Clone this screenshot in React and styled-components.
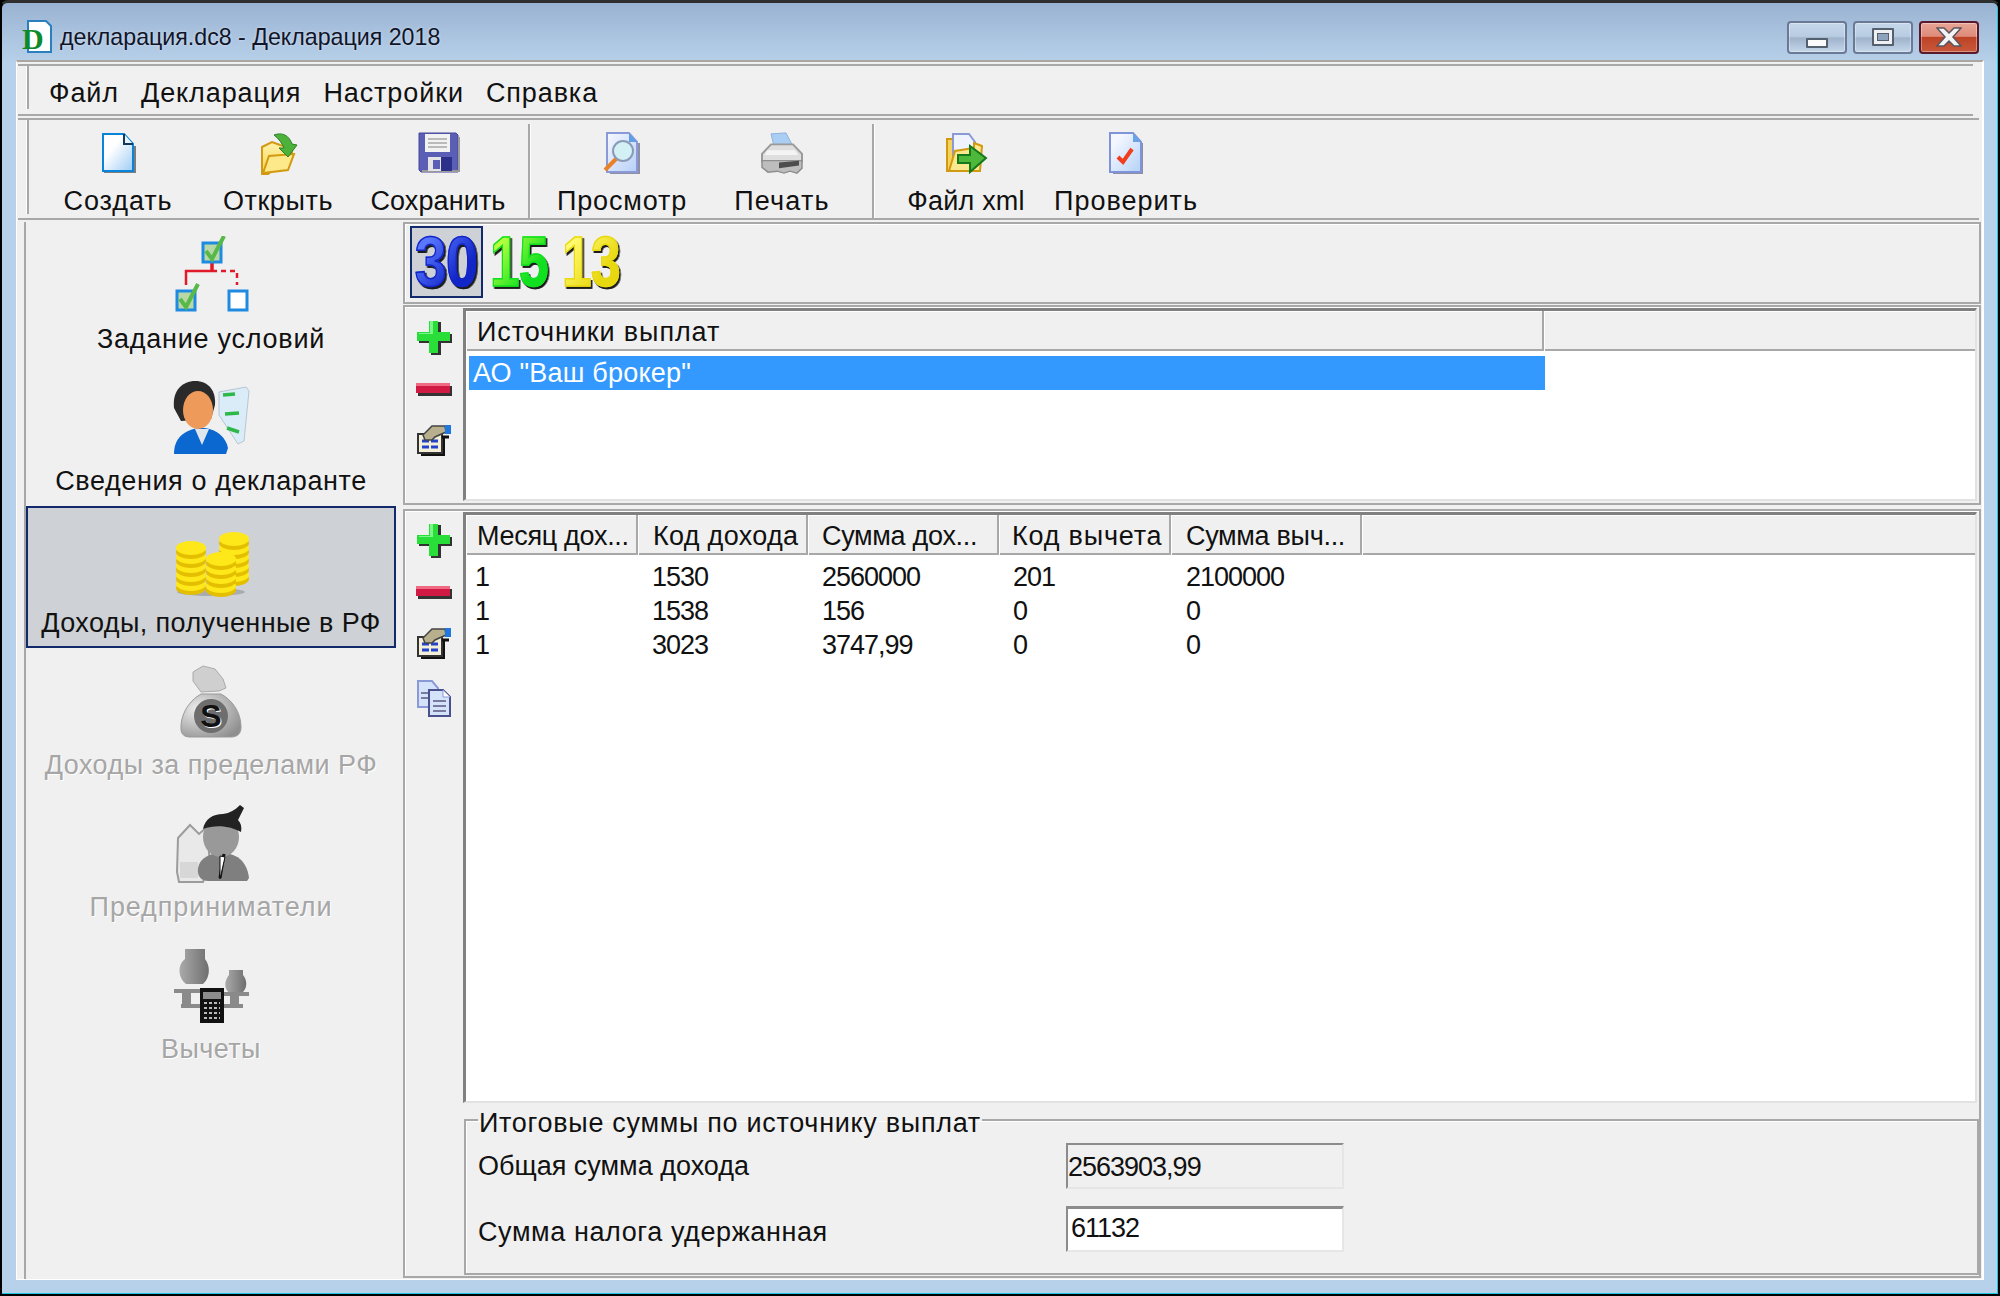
import React from 'react';
import styled, { createGlobalStyle } from 'styled-components';

const Global = createGlobalStyle`
  html, body { margin: 0; padding: 0; background: #000; }
  body { font-family: "Liberation Sans", Arial, sans-serif; font-size: 27px; color: #111; }
  * { box-sizing: border-box; }
`;

const Frame = styled.div`
  width: 2000px;
  height: 1296px;
  border-top: 3px solid #2f2f2f;
  border-left: 2px solid #000;
  border-right: 2px solid #000;
  border-bottom: 2px solid #000;
  border-radius: 8px 8px 0 0;
  background: linear-gradient(180deg, #9ab3d2 0, #b8d1ea 60px, #b8d1ea 100%);
  box-shadow: inset -1px -1px 0 #1fc4e0;
  display: flex;
  flex-direction: column;
`;

const TitleBar = styled.div`
  height: 57px;
  padding: 11px 19px 0 17px;
  display: flex;
  align-items: center;
`;

const Title = styled.div`
  margin-left: 7px;
  flex: 1;
  font-size: 23.2px;
  color: #10152a;
  text-shadow: 0 0 3px rgba(255, 255, 255, 0.55);
  white-space: nowrap;
`;

const WinButtons = styled.div`
  display: flex;
  gap: 6px;
`;

const WinBtn = styled.div`
  width: 60px;
  height: 33px;
  border-radius: 4px;
  border: 2px solid ${p => (p.$close ? '#5a1a2c' : '#6a7a96')};
  box-shadow: inset 0 0 0 1px rgba(255, 255, 255, 0.35);
  background: ${p =>
    p.$close
      ? 'linear-gradient(180deg, #e8a596 0, #de8a78 46%, #bd4325 50%, #c9583a 100%)'
      : 'linear-gradient(180deg, #c6d7ea 0, #b8cce2 46%, #9fb3cb 52%, #c4d6ea 100%)'};
  display: flex;
  align-items: center;
  justify-content: center;
`;

const MinGlyph = styled.span`
  width: 22px;
  height: 10px;
  margin-top: 12px;
  background: #fafafa;
  border: 2px solid #55606f;
  border-radius: 1px;
`;

const MaxGlyph = styled.span`
  width: 22px;
  height: 18px;
  background: #eef0f4;
  border: 2px solid #55606f;
  border-radius: 1px;
  display: flex;
  align-items: center;
  justify-content: center;
  &::after {
    content: '';
    width: 10px;
    height: 6px;
    background: #8da2bd;
    border: 1px solid #55606f;
  }
`;

const Client = styled.div`
  height: 1220px;
  margin: 0 14px 0 14px;
  background: #f0f0f0;
  border-top: 2px solid #aaa6a2;
  border-left: 1px solid #fff;
  border-right: 2px solid #fff;
  border-bottom: 1px solid #fff;
  display: flex;
  flex-direction: column;
`;

const MenuBar = styled.div`
  height: 52px;
  margin: 2px 9px 0 1px;
  border-top: 2px solid #a8a8a8;
  border-bottom: 2px solid #a8a8a8;
  display: flex;
  align-items: flex-start;
`;

const Grip = styled.span`
  flex: none;
  width: 2px;
  height: ${p => p.$h}px;
  margin-left: 9px;
  background: #a8a8a8;
  box-shadow: -1px 0 0 #fff;
`;

const MenuList = styled.div`
  display: flex;
  gap: 22px;
  margin-left: 20px;
  line-height: 48px;
  padding-top: 3px;
  letter-spacing: 0.9px;
`;

const MenuItem = styled.span`
  white-space: nowrap;
`;

const ToolBar = styled.div`
  height: 102px;
  margin: 2px 3px 0 1px;
  border-top: 2px solid #a8a8a8;
  border-bottom: 2px solid #a8a8a8;
  display: flex;
  align-items: flex-start;
`;

const ToolGroup = styled.div`
  display: flex;
  margin-left: 9px;
`;

const ToolButton = styled.div`
  width: 160px;
  padding-top: 11px;
  display: flex;
  flex-direction: column;
  align-items: center;
`;

const ToolLabel = styled.span`
  margin-top: 11px;
  line-height: 30px;
  white-space: nowrap;
  letter-spacing: ${p => p.$ls}px;
`;

const ToolSep = styled.span`
  flex: none;
  width: 2px;
  height: 94px;
  margin: 4px 12px 0 10px;
  background: #a8a8a8;
  box-shadow: 1px 0 0 #fff;
`;

const Main = styled.div`
  flex: 1;
  min-height: 0;
  display: flex;
`;

const Sidebar = styled.div`
  width: 386px;
  padding: 2px 7px 0 0;
  flex: none;
`;

const SideRail = styled.div`
  height: 100%;
  margin-left: 7px;
  border-left: 2px solid #a8a8a8;
`;

const SideItem = styled.div`
  height: 142px;
  padding-top: 12px;
  display: flex;
  flex-direction: column;
  align-items: center;
  border: 2px solid ${p => (p.$active ? '#12296b' : 'transparent')};
  background: ${p => (p.$active ? '#ced1d6' : 'transparent')};
  color: ${p => (p.$disabled ? '#a6a6a6' : '#111')};
  text-shadow: ${p => (p.$disabled ? '1px 1px 0 #fff' : 'none')};
`;

const SideLabel = styled.span`
  margin-top: 8px;
  line-height: 30px;
  white-space: nowrap;
  letter-spacing: ${p => p.$ls}px;
`;

const Right = styled.div`
  flex: 1;
  min-width: 0;
  margin-right: 1px;
  display: flex;
  flex-direction: column;
`;

const Panel = styled.div`
  border: 2px solid #a8a8a8;
  box-shadow: inset 1px 1px 0 #fff;
`;

const PeriodStrip = styled(Panel)`
  height: 82px;
  margin-top: 2px;
  padding: 2px 0 0 5px;
  display: flex;
  align-items: flex-start;
`;

const PeriodTile = styled.div`
  width: 72.5px;
  height: 72px;
  border: 2px solid ${p => (p.$active ? '#12296b' : 'transparent')};
  background: ${p => (p.$active ? '#ced1d6' : 'transparent')};
  display: flex;
  align-items: center;
  justify-content: center;
`;

const PeriodNum = styled.span`
  display: inline-block;
  flex: none;
  font-size: 70px;
  font-weight: 700;
  line-height: 70px;
  letter-spacing: -1px;
  transform: scaleX(${p => p.$sx});
  background: linear-gradient(135deg, ${p => p.$from} 20%, ${p => p.$to} 70%);
  -webkit-background-clip: text;
  background-clip: text;
  color: transparent;
  -webkit-text-stroke: 1.5px ${p => p.$to};
  filter: drop-shadow(2px 2px 0 #1c1c1c);
`;

const SourcePanel = styled(Panel)`
  height: 200px;
  margin-top: 1px;
  display: flex;
`;

const IncomePanel = styled(Panel)`
  flex: 1;
  min-height: 0;
  margin: 4px 0 1px;
  display: flex;
`;

const ToolColumn = styled.div`
  width: 58px;
  flex: none;
  padding-top: ${p => p.$top}px;
  display: flex;
  flex-direction: column;
  align-items: center;
`;

const IconBtn = styled.div`
  height: ${p => p.$h || 51}px;
  display: flex;
  align-items: center;
  justify-content: center;
`;

const ListBox = styled.div`
  background: #fff;
  border-top: 3px solid #808080;
  border-left: 3px solid #808080;
  border-right: 2px solid #e2e2e2;
  border-bottom: 2px solid #e2e2e2;
  overflow: hidden;
`;

const SourceList = styled(ListBox)`
  flex: 1;
  margin: 1px 2px 2px 0;
`;

const HeadRow = styled.div`
  height: 40px;
  display: grid;
  grid-template-columns: ${p => p.$cols};
  background: #f0f0f0;
  border-bottom: 2px solid #a8a8a8;
`;

const HeadCell = styled.div`
  padding-left: ${p => p.$pad}px;
  padding-top: 3px;
  line-height: 37px;
  letter-spacing: ${p => p.$ls || 0}px;
  border-right: ${p => (p.$last ? 'none' : '2px solid #a8a8a8')};
  white-space: nowrap;
  box-shadow: inset 1px 1px 0 #fff;
`;

const SelectedRow = styled.div`
  width: 1076px;
  height: 34px;
  margin: 5px 0 0 3px;
  padding-left: 4px;
  background: #3399ff;
  color: #fff;
  line-height: 35px;
  letter-spacing: 0.2px;
  white-space: nowrap;
`;

const IncomeBody = styled.div`
  flex: 1;
  min-width: 0;
  display: flex;
  flex-direction: column;
`;

const IncomeList = styled(ListBox)`
  flex: 1;
  min-height: 0;
  margin: 1px 2px 0 0;
`;

const Rows = styled.div`
  padding-top: 5px;
`;

const DataRow = styled.div`
  height: 34px;
  display: grid;
  grid-template-columns: ${p => p.$cols};
`;

const DataCell = styled.div`
  padding-left: ${p => p.$pad}px;
  line-height: 34px;
  letter-spacing: -1px;
  white-space: nowrap;
`;

const TotalsBox = styled.fieldset`
  margin: -1px 0 1px 1px;
  height: 173px;
  padding: 0 0 0 12px;
  border: 2px solid #a8a8a8;
  box-shadow: inset 1px 1px 0 #fff;
  min-width: 0;
`;

const TotalsLegend = styled.legend`
  padding: 6px 1px 0;
  line-height: 30px;
  letter-spacing: 0.7px;
  white-space: nowrap;
`;

const TotalsRow = styled.div`
  height: ${p => p.$h}px;
  display: flex;
  align-items: center;
`;

const TotalsLabel = styled.span`
  width: 588px;
  flex: none;
  padding-top: ${p => p.$drop || 0}px;
  letter-spacing: ${p => p.$ls || 0}px;
  white-space: nowrap;
`;

const TotalsField = styled.div`
  width: 278px;
  height: 46px;
  padding-left: ${p => (p.$editable ? 3 : 0)}px;
  line-height: ${p => (p.$editable ? 38 : 44)}px;
  letter-spacing: -1px;
  background: ${p => (p.$editable ? '#fff' : '#f0f0f0')};
  border-top: ${p => (p.$editable ? 3 : 2)}px solid #8c8c8c;
  border-left: 2px solid #8c8c8c;
  border-right: 2px solid #e6e6e6;
  border-bottom: 2px solid #e6e6e6;
`;

/* window icon */
const AppIcon = () => (
  <svg width="34" height="36" viewBox="0 0 34 36">
    <path d="M9 2h18l5 5v26H9z" fill="#fff" stroke="#2a7fc0" strokeWidth="2" />
    <text x="3" y="30" fontFamily="Liberation Serif" fontWeight="700" fontSize="30" fill="#0f8a2a">D</text>
  </svg>
);

const CloseGlyph = () => (
  <svg width="26" height="20" viewBox="0 0 26 20">
    <path d="M1 1h7l5 5 5-5h7l-8 9 8 9h-7l-5-5-5 5H1l8-9z" fill="#f4f4f4" stroke="#5b5560" strokeWidth="1.5" />
  </svg>
);

/* toolbar icons */
const IconNew = () => (
  <svg width="44" height="44" viewBox="0 0 44 44">
    <defs>
      <linearGradient id="newFill" x1="0" y1="0" x2="1" y2="1">
        <stop offset="0.35" stopColor="#fff" />
        <stop offset="1" stopColor="#9dccf5" />
      </linearGradient>
    </defs>
    <path d="M8 41h31V15" fill="none" stroke="#7d7d7d" strokeWidth="2" />
    <path d="M7 3h21l9 10v27H7z" fill="url(#newFill)" stroke="#0a84d8" strokeWidth="2" />
    <path d="M28 3v10h9" fill="#e8f3fb" stroke="#123a5c" strokeWidth="2" />
  </svg>
);

const IconOpen = () => (
  <svg width="44" height="44" viewBox="0 0 44 44">
    <defs>
      <linearGradient id="openFill" x1="0" y1="0" x2="0" y2="1">
        <stop offset="0" stopColor="#fff3ae" />
        <stop offset="1" stopColor="#f7d24a" />
      </linearGradient>
    </defs>
    <path d="M6 16l10-5 8 3 12 3v8L12 43H6z" fill="url(#openFill)" stroke="#d29a10" strokeWidth="2" />
    <path d="M7 42l6-17 25-2-6 16z" fill="#fde98a" stroke="#d29a10" strokeWidth="2" />
    <path d="M18 4c8-3 15 0 18 9l5 1-9 12-9-9 5 0c-2-5-5-9-10-13z" fill="#4cb23a" stroke="#2c7f24" strokeWidth="1" />
  </svg>
);

const IconSave = () => (
  <svg width="44" height="44" viewBox="0 0 44 44">
    <path d="M3 2h37l2 2v37H5l-2-2z" fill="#5a5fb5" stroke="#44489a" strokeWidth="1" />
    <path d="M6 40h37V6" fill="none" stroke="#9a9a9a" strokeWidth="2" />
    <rect x="9" y="3" width="25" height="18" fill="#f2f2f2" />
    <path d="M12 8h19M12 12h19M12 16h19" stroke="#a8a8a8" strokeWidth="1.5" />
    <rect x="12" y="26" width="21" height="14" fill="#e4e4e4" />
    <rect x="25" y="26" width="11" height="14" fill="#2d308a" />
    <rect x="17" y="29" width="7" height="9" fill="#5a5fb5" />
  </svg>
);

const IconPreview = () => (
  <svg width="44" height="44" viewBox="0 0 44 44">
    <defs>
      <linearGradient id="prevFill" x1="0" y1="0" x2="1" y2="1">
        <stop offset="0" stopColor="#f6f8ff" />
        <stop offset="1" stopColor="#b7d0f7" />
      </linearGradient>
    </defs>
    <path d="M10 42h29V12" fill="none" stroke="#8f8fa3" strokeWidth="2" />
    <path d="M7 2h22l8 9v30H7z" fill="url(#prevFill)" stroke="#8a9ad8" strokeWidth="2" />
    <path d="M29 2v9h8z" fill="#5f9fe8" />
    <circle cx="23" cy="20" r="10" fill="#d3f0f5" stroke="#8a9ab8" strokeWidth="2" />
    <path d="M16 28L5 39" stroke="#e8812a" strokeWidth="4" />
  </svg>
);

const IconPrint = () => (
  <svg width="46" height="44" viewBox="0 0 46 46" preserveAspectRatio="none">
    <path d="M12 3l15-1 7 14H15z" fill="#a9cdf3" stroke="#8eb0d8" strokeWidth="1" />
    <path d="M3 24l9-10h22l9 10v8H3z" fill="#dedede" stroke="#9a9a9a" strokeWidth="2" />
    <path d="M8 20h28l3 5H6z" fill="#f4f4f4" />
    <path d="M3 31h40v8l-5 5-7-2-6 2-7-2-9 1-6-5z" fill="#bdbdbd" stroke="#8e8e8e" strokeWidth="1.5" />
    <path d="M20 33l20-2v5l-20 3z" fill="#4d4d4d" />
  </svg>
);

const IconXml = () => (
  <svg width="44" height="44" viewBox="0 0 44 44">
    <path d="M3 8h6v32H3z" fill="#f5d35b" stroke="#d29a10" strokeWidth="2" />
    <path d="M9 3h16l6 8v22H9z" fill="#eef3fd" stroke="#8a9ad8" strokeWidth="2" />
    <path d="M30 12l8 3-2 25H5l6-20 19-3z" fill="#fbe88e" stroke="#d29a10" strokeWidth="2" />
    <path d="M14 24h12v-9l16 12-16 14v-9H14z" fill="#4eb83a" stroke="#15781c" strokeWidth="2" />
  </svg>
);

const IconCheck = () => (
  <svg width="44" height="44" viewBox="0 0 44 44">
    <defs>
      <linearGradient id="checkFill" x1="0" y1="0" x2="1" y2="1">
        <stop offset="0.2" stopColor="#f4f7ff" />
        <stop offset="1" stopColor="#b4d2f7" />
      </linearGradient>
    </defs>
    <path d="M9 42h29V12" fill="none" stroke="#8f8fa3" strokeWidth="2" />
    <path d="M6 2h23l8 9v30H6z" fill="url(#checkFill)" stroke="#7f93d9" strokeWidth="2" />
    <path d="M29 2v9h8z" fill="#6aa3e6" />
    <path d="M14 26l5 5 9-13" fill="none" stroke="#f23c1e" strokeWidth="4" />
  </svg>
);

/* sidebar icons */
const CheckBox = ({ x, y, checked }) => (
  <g>
    <rect x={x} y={y} width="18" height="19" fill={checked ? '#b8d8a8' : '#fff'} stroke="#1e8ae0" strokeWidth="3" />
    {checked && <path d={`M${x + 3} ${y + 8}l6 8 12-23`} fill="none" stroke="#58b848" strokeWidth="4" />}
  </g>
);

const IconTree = () => (
  <svg width="80" height="80" viewBox="0 0 80 80">
    <path d="M41 23v12" fill="none" stroke="#e01a28" strokeWidth="3.5" />
    <path d="M41 35H15v14" fill="none" stroke="#e01a28" strokeWidth="2.5" />
    <path d="M41 35h25v14" fill="none" stroke="#e01a28" strokeWidth="2.5" strokeDasharray="5 4" />
    <CheckBox x={32} y={7} checked />
    <CheckBox x={6} y={55} checked />
    <CheckBox x={58} y={55} />
  </svg>
);

const IconPerson = () => (
  <svg width="80" height="80" viewBox="0 0 80 80">
    <path d="M48 14l27-5 3 4-5 50-6 3-19-29z" fill="#d9ecf8" stroke="#b7c6d2" strokeWidth="1" />
    <path d="M52 17l12-1M54 36l14-1M56 50l12 4" stroke="#2eb84a" strokeWidth="3.5" />
    <path d="M3 76c0-16 10-24 25-26h6c13 2 21 10 23 20l-2 6z" fill="#0a68d0" />
    <path d="M24 51h14l-7 16z" fill="#dfe6ee" />
    <path d="M3 30C1 12 12 3 24 3c14 0 21 10 20 24l-4 14-30 2z" fill="#2a2a2a" />
    <ellipse cx="27" cy="32" rx="15" ry="19" fill="#ee9a5a" />
  </svg>
);

const CoinStack = ({ x, bottom, n }) => (
  <g>
    {Array.from({ length: n }, (_, i) => (
      <g key={i}>
        <ellipse cx={x} cy={bottom - i * 9 + 4} rx="15" ry="7" fill="#e4bf00" />
        <ellipse cx={x} cy={bottom - i * 9} rx="15" ry="7" fill="#ffe81a" />
      </g>
    ))}
  </g>
);

const IconCoins = () => (
  <svg width="80" height="80" viewBox="0 0 80 80">
    <ellipse cx="40" cy="72" rx="34" ry="4" fill="#a8abb0" />
    <CoinStack x={63} bottom={55} n={5} />
    <CoinStack x={20} bottom={64} n={5} />
    <CoinStack x={50} bottom={66} n={4} />
  </svg>
);

const IconBag = () => (
  <svg width="80" height="80" viewBox="0 0 80 80">
    <defs>
      <radialGradient id="bagFill" cx="0.3" cy="0.35" r="0.8">
        <stop offset="0" stopColor="#efefef" />
        <stop offset="1" stopColor="#8f8f8f" />
      </radialGradient>
    </defs>
    <path d="M22 10l10-6 12 3 8 10 3 9-7 3-18 1-8-11z" fill="#cfcfcf" stroke="#aaa" strokeWidth="1" />
    <path d="M30 32C16 40 9 55 10 68c1 6 5 7 10 7h40c7 0 10-4 10-10 0-15-9-27-20-33z" fill="url(#bagFill)" stroke="#999" strokeWidth="1" />
    <circle cx="40" cy="54" r="17" fill="#6e6e6e" />
    <text x="40" y="65" textAnchor="middle" fontFamily="Liberation Sans" fontWeight="700" fontSize="32" fill="#111">S</text>
  </svg>
);

const IconBusiness = () => (
  <svg width="80" height="80" viewBox="-3 0 80 80">
    <path d="M4 34l12-13 9 9 8-7 3 38-7 17H5l-2-10z" fill="#e9e9e9" stroke="#9c9c9c" strokeWidth="2" />
    <path d="M6 58h18v16H6z" fill="#d7d7d7" />
    <path d="M24 64c2-11 13-15 24-15 13 0 25 7 27 25l-2 3H34c-7 0-11-5-10-13z" fill="#7f7f7f" />
    <ellipse cx="47" cy="33" rx="18" ry="20" fill="#999" />
    <path d="M29 25c2-10 10-15 20-15 7-1 12-4 17-9l4 3-6 12c3 3 4 7 3 12-10-6-25-8-38-3z" fill="#222" />
    <path d="M50 50l-4 24" stroke="#111" strokeWidth="3" />
    <path d="M46 52l5 1-5 22z" fill="#fff" stroke="#111" strokeWidth="1" />
  </svg>
);

const IconScale = () => (
  <svg width="80" height="80" viewBox="0 0 80 80">
    <defs>
      <linearGradient id="jarFill" x1="0" y1="0" x2="1" y2="0">
        <stop offset="0" stopColor="#aaa" />
        <stop offset="1" stopColor="#6f6f6f" />
      </linearGradient>
    </defs>
    <path d="M14 3h20v10c5 6 6 18-2 25H15C7 32 6 19 14 13z" fill="url(#jarFill)" />
    <path d="M58 24h14v5c5 6 4 14-1 18H58c-5-5-5-12 0-18z" fill="url(#jarFill)" />
    <path d="M3 43h40v4H3zM46 46h32v4H46zM11 47h9v13h-9zM59 48h9v12h-9zM10 58h28v4H10zM46 58h26v4H46z" fill="#8a8a8a" />
    <rect x="29" y="42" width="24" height="35" fill="#111" />
    <rect x="32" y="46" width="18" height="7" fill="#8c8c8c" />
    <path d="M33 57h16M33 62h16M33 67h16M33 72h16" stroke="#bbb" strokeWidth="2" strokeDasharray="3 2" />
  </svg>
);

/* small list icons */
const IconPlus = () => (
  <svg width="36" height="36" viewBox="0 2 36 36">
    <path d="M15 3h10v12h11v9H25v12H15V24H3v-9h12z" fill="#111" opacity="0.85" />
    <path d="M13 1h9v12h12v9H22v12h-9V22H1v-9h12z" fill="#2ade3a" />
    <path d="M14 2h3v13H3v-1h11z" fill="#7cf58a" />
  </svg>
);

const IconMinus = () => (
  <svg width="36" height="14" viewBox="0 0 36 14">
    <rect x="2" y="3" width="34" height="10" fill="#333" />
    <rect x="0" y="0" width="34" height="10" fill="#d01a44" />
    <rect x="0" y="0" width="34" height="3" fill="#ef6a82" />
  </svg>
);

const IconEdit = () => (
  <svg width="36" height="32" viewBox="0 1 36 32">
    <path d="M5 13h24v19H5z" fill="#111" />
    <path d="M2 10h24v19H2z" fill="#f4efd8" stroke="#333" strokeWidth="2" />
    <path d="M6 17h7M15 17h7M6 23h7M15 23h7" stroke="#2244cc" strokeWidth="3" />
    <path d="M7 11l9-9h13l1 6-11 5-3 3H9z" fill="#b8b08c" stroke="#444" strokeWidth="1.5" />
    <rect x="29" y="1" width="6" height="9" fill="#1f78e0" />
    <path d="M26 13h7" stroke="#111" strokeWidth="3" />
  </svg>
);

const IconCopy = () => (
  <svg width="36" height="38" viewBox="0 0 36 38">
    <path d="M2 2h14l6 7v19H2z" fill="#d4e2fa" stroke="#8a9ad8" strokeWidth="2" />
    <path d="M5 14h10M5 19h10" stroke="#7a7aa0" strokeWidth="2" />
    <path d="M13 11h14l7 7v19H13z" fill="#d4e2fa" stroke="#4a4f8e" strokeWidth="2" />
    <path d="M27 11v7h7" fill="#fff" stroke="#8a9ad8" strokeWidth="1" />
    <path d="M17 22h13M17 27h13M17 32h13" stroke="#7a7aa0" strokeWidth="2" />
  </svg>
);

const toolGroups = [
  [
    { label: 'Создать', ls: 0.9, icon: <IconNew /> },
    { label: 'Открыть', ls: 0.6, icon: <IconOpen /> },
    { label: 'Сохранить', ls: 0.1, icon: <IconSave /> },
  ],
  [
    { label: 'Просмотр', ls: 0.85, icon: <IconPreview /> },
    { label: 'Печать', ls: 1.2, icon: <IconPrint /> },
  ],
  [
    { label: 'Файл xml', ls: 0.2, icon: <IconXml /> },
    { label: 'Проверить', ls: 1, icon: <IconCheck /> },
  ],
];

const sideItems = [
  { label: 'Задание условий', ls: 0.75, icon: <IconTree /> },
  { label: 'Сведения о декларанте', ls: 0.6, icon: <IconPerson /> },
  { label: 'Доходы, полученные в РФ', ls: 0.4, icon: <IconCoins />, active: true },
  { label: 'Доходы за пределами РФ', ls: 0.45, icon: <IconBag />, disabled: true },
  { label: 'Предприниматели', ls: 0.9, icon: <IconBusiness />, disabled: true },
  { label: 'Вычеты', ls: 0.4, icon: <IconScale />, disabled: true },
];

const periods = [
  { num: '30', from: '#5a78ff', to: '#1226c8', sx: 0.82, active: true },
  { num: '15', from: '#b8ff40', to: '#10e020', sx: 0.76 },
  { num: '13', from: '#fffa70', to: '#e8d810', sx: 0.76 },
];

const incomeCols = '172px 170px 191px 172px 191px 1fr';
const incomeHead = [
  { text: 'Месяц дох...', pad: 11, ls: -0.3 },
  { text: 'Код дохода', pad: 15, ls: 0.3 },
  { text: 'Сумма дох...', pad: 14, ls: -0.3 },
  { text: 'Код вычета', pad: 13, ls: 0.8 },
  { text: 'Сумма выч...', pad: 15, ls: -0.3 },
  { text: '', pad: 0, last: true },
];
const rowPads = [9, 14, 14, 14, 15];
const incomeRows = [
  ['1', '1530', '2560000', '201', '2100000'],
  ['1', '1538', '156', '0', '0'],
  ['1', '3023', '3747,99', '0', '0'],
];

const App = () => (
  <Frame>
    <Global />
    <TitleBar>
      <AppIcon />
      <Title>декларация.dc8 - Декларация 2018</Title>
      <WinButtons>
        <WinBtn><MinGlyph /></WinBtn>
        <WinBtn><MaxGlyph /></WinBtn>
        <WinBtn $close><CloseGlyph /></WinBtn>
      </WinButtons>
    </TitleBar>
    <Client>
      <MenuBar>
        <Grip $h={43} />
        <MenuList>
          {['Файл', 'Декларация', 'Настройки', 'Справка'].map(m => (
            <MenuItem key={m}>{m}</MenuItem>
          ))}
        </MenuList>
      </MenuBar>
      <ToolBar>
        <Grip $h={94} />
        <ToolGroup>
          {toolGroups.map((group, i) => (
            <React.Fragment key={i}>
              {group.map(b => (
                <ToolButton key={b.label}>
                  {b.icon}
                  <ToolLabel $ls={b.ls}>{b.label}</ToolLabel>
                </ToolButton>
              ))}
              {i < toolGroups.length - 1 && <ToolSep />}
            </React.Fragment>
          ))}
        </ToolGroup>
      </ToolBar>
      <Main>
        <Sidebar>
          <SideRail>
            {sideItems.map(s => (
              <SideItem key={s.label} $active={s.active} $disabled={s.disabled}>
                {s.icon}
                <SideLabel $ls={s.ls}>{s.label}</SideLabel>
              </SideItem>
            ))}
          </SideRail>
        </Sidebar>
        <Right>
          <PeriodStrip>
            {periods.map(p => (
              <PeriodTile key={p.num} $active={p.active}>
                <PeriodNum $from={p.from} $to={p.to} $sx={p.sx}>{p.num}</PeriodNum>
              </PeriodTile>
            ))}
          </PeriodStrip>
          <SourcePanel>
            <ToolColumn $top={6}>
              <IconBtn><IconPlus /></IconBtn>
              <IconBtn><IconMinus /></IconBtn>
              <IconBtn><IconEdit /></IconBtn>
            </ToolColumn>
            <SourceList>
              <HeadRow $cols="1078px 1fr">
                <HeadCell $pad={11} $ls={0.9}>Источники выплат</HeadCell>
                <HeadCell $pad={0} $last />
              </HeadRow>
              <SelectedRow>АО "Ваш брокер"</SelectedRow>
            </SourceList>
          </SourcePanel>
          <IncomePanel>
            <ToolColumn $top={5}>
              <IconBtn><IconPlus /></IconBtn>
              <IconBtn><IconMinus /></IconBtn>
              <IconBtn><IconEdit /></IconBtn>
              <IconBtn $h={58}><IconCopy /></IconBtn>
            </ToolColumn>
            <IncomeBody>
              <IncomeList>
                <HeadRow $cols={incomeCols}>
                  {incomeHead.map((h, i) => (
                    <HeadCell key={i} $pad={h.pad} $ls={h.ls} $last={h.last}>{h.text}</HeadCell>
                  ))}
                </HeadRow>
                <Rows>
                  {incomeRows.map((row, r) => (
                    <DataRow key={r} $cols={incomeCols}>
                      {row.map((c, i) => (
                        <DataCell key={i} $pad={rowPads[i]}>{c}</DataCell>
                      ))}
                    </DataRow>
                  ))}
                </Rows>
              </IncomeList>
              <TotalsBox>
                <TotalsLegend>Итоговые суммы по источнику выплат</TotalsLegend>
                <TotalsRow $h={56}>
                  <TotalsLabel>Общая сумма дохода</TotalsLabel>
                  <TotalsField>2563903,99</TotalsField>
                </TotalsRow>
                <TotalsRow $h={70}>
                  <TotalsLabel $ls={0.6} $drop={6}>Сумма налога удержанная</TotalsLabel>
                  <TotalsField $editable>61132</TotalsField>
                </TotalsRow>
              </TotalsBox>
            </IncomeBody>
          </IncomePanel>
        </Right>
      </Main>
    </Client>
  </Frame>
);

export default App;
